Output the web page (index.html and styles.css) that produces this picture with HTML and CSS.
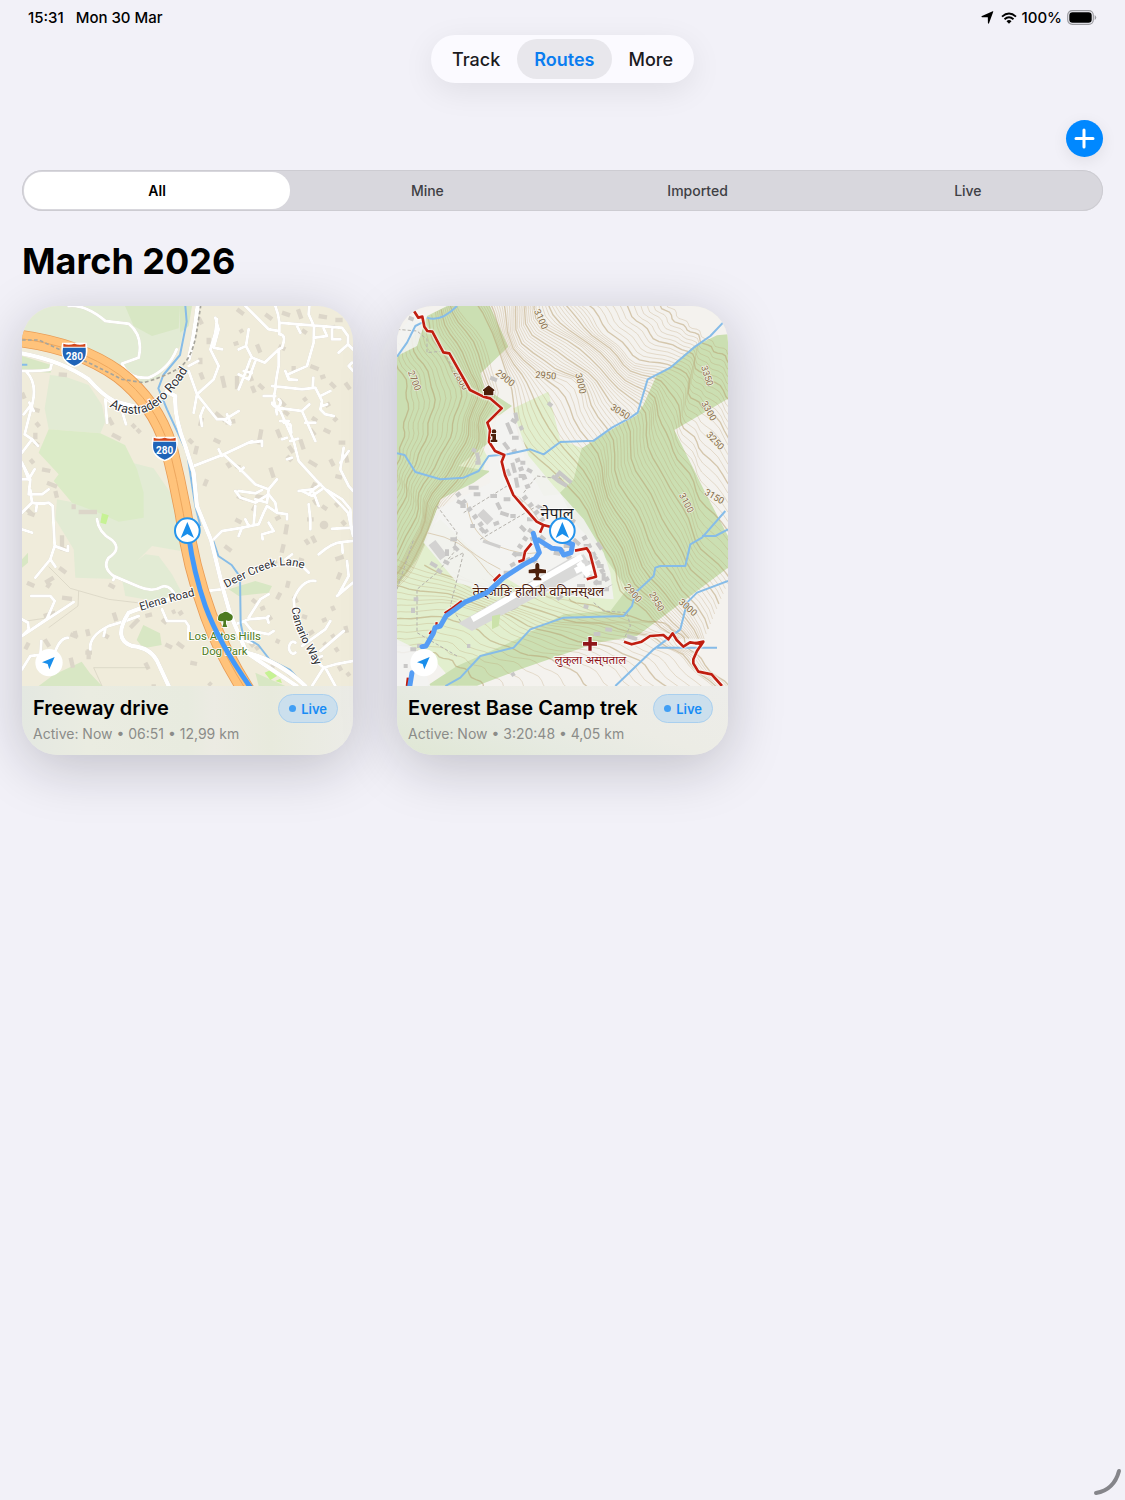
FILE: index.html
```html
<!DOCTYPE html>
<html lang="en">
<head>
<meta charset="utf-8">
<meta name="viewport" content="width=device-width, initial-scale=1">
<title>Routes</title>
<link rel="stylesheet" href="styles.css">
</head>
<body>
<div class="status">
  <span class="status-time">15:31</span>
  <span class="status-date">Mon 30 Mar</span>
  <span class="status-right">
    <svg class="icon-location" viewBox="0 0 12 12" aria-hidden="true"><path d="M11.3.6 7.4 11.2Q6.9 12.200 6.400 11L6.300 5.800 1 5.700Q-.1 5.300.9 4.700L10.800.3Q11.500.1 11.300.6Z"/></svg>
    <svg class="icon-wifi" viewBox="0 0 16 12" aria-hidden="true"><g fill="none" stroke="#000" stroke-width="1.900"><path d="M1 4.600Q8-1.700 15 4.600"/><path d="M3.500 7.300Q8 3.300 12.500 7.300"/></g><path d="M5.500 9.200Q8 7 10.500 9.200L8 11.800Z"/></svg>
    <span>100%</span>
    <svg class="icon-battery" viewBox="0 0 30 15" aria-hidden="true"><rect x=".7" y=".7" width="25.600" height="13.600" rx="4.500" fill="none" stroke="#9b9ba0" stroke-width="1.200"/><rect x="2.300" y="2.300" width="22.400" height="10.400" rx="3.200"/><path d="M27.700 5Q29.200 6 29.200 7.500T27.700 10Z" fill="#9b9ba0"/></svg>
  </span>
</div>

<nav class="tabs" aria-label="Sections">
  <button type="button" class="tab">Track</button>
  <button type="button" class="tab tab-on" aria-current="page">Routes</button>
  <button type="button" class="tab">More</button>
</nav>

<main class="content">
  <div class="toolbar">
    <button type="button" class="add" aria-label="Add route"><svg viewBox="0 0 37 37" aria-hidden="true"><path d="M18 10V27M10 18.500H27"/></svg></button>
  </div>

  <div class="segments" role="group" aria-label="Filter routes">
    <button type="button" class="segment segment-on" aria-pressed="true">All</button>
    <button type="button" class="segment" aria-pressed="false">Mine</button>
    <button type="button" class="segment" aria-pressed="false">Imported</button>
    <button type="button" class="segment" aria-pressed="false">Live</button>
  </div>

  <h1 class="month">March 2026</h1>

  <div class="cards">
    <article class="card">
      <svg class="map map-road" viewBox="0 0 993 1140" role="img" aria-label="Map of Freeway drive">
        <defs>
          <path id="arastradero" d="M262 302Q350 352 420 288 475 238 512 165"/>
          <path id="elena" d="M356 914Q450 885 550 862"/>
          <path id="deer" d="M613 846Q700 800 750 784T865 796"/>
          <path id="canario" d="M809 905Q815 960 845 1015T900 1115"/>
        </defs>
        <g class="green">
          <path d="M0 0H500L474 120 410 215 350 235 220 150 0 75Z"/>
          <path class="mid" d="M309 0H474L470 67 390 90 335 60Z"/>
          <path class="mid" d="M0 150 90 178 86 200 0 195Z"/>
          <path d="M84 207 130 212 200 237 240 297 250 347 235 382 80 370 68 307Z"/>
          <path d="M330 470 395 487 452 570 476 735 390 720 345 765 370 745 410 750 450 805 490 880 400 885 310 870 300 820 160 815 155 730 100 640 105 580 160 590 300 630 350 600Z"/>
          <path class="bright" d="M80 370 235 382 309 417 345 490 365 560 365 635 290 647 230 620 150 590 95 525 110 505 50 440Z"/>
          <path class="mid" d="M364 957 414 982 419 1017 364 1027 344 1002ZM50 1140 94 1107 179 1067 204 1102 240 1140ZM474 0H510L500 60 474 80ZM620 850 700 825 750 840 740 860 650 870ZM0 760 18 740 18 770 0 785ZM700 1100 790 1140H710Z"/>
          <path class="lime" d="M240 622 260 628 252 655 235 650ZM728 1100 750 1090 765 1110 745 1122ZM760 1125 775 1118 780 1132Z"/>
        </g>
        <g class="houses">
          <path d="M110 205l25 2M270 385l26 14M260 335l12 22M330 355l10 10M345 370l10 10M35 310l18 5M0 260l8 18M42 350l10 12M40 380v20M25 460l10 12M60 490l25 5M75 530l30 12M100 555l5 20M38 410l12 8"/>
          <path d="M170 618h55M155 595v15M120 688v40l20 5M112 785l20 15M15 830l22 10M70 830l25-15M75 845l10-15M18 620l20 8M10 605l20 20M120 875l30 4M65 930l35-10M145 985l22 8M158 975l5 20M10 1030l10-20M68 1000l14 22M146 1055l7 30M245 985l15 10M200 1030v30M190 1040h20M195 970l5 20M275 920l8 25M325 965l25-25M370 930l20-5M450 920l10-5M470 925l12-8M420 940l14 12M430 1015l20 10M465 1010l20 15M370 1070l10 20M395 1135v5M260 835l18 10"/>
          <path d="M645 10l20 15M530 35l10 20M560 95v20M535 155v20M535 200l8 20M600 210l8 35M730 25l20 15M780 20l24 8M828 10l10 28M890 30l25 4M940 42h22M925 65l15-2M840 72l14 10M635 115l14-5M655 70l6 10M705 115l10 25M675 185l15 40M645 210v40M690 240l8 20M770 120l20 10M815 180v20M865 180l25 10M895 215l15-5M925 230l15 15M970 230l14 20M710 235l15 14M770 280l20 20M785 315l15 12M845 275l8 10M910 300l14-8M935 345l10-10M905 370l20 10M870 335l15 10M580 320l30 25M610 350l30-5M540 335l-6 25M500 400l12 12M525 420l-6 25M575 400l20 10M710 415l8-45M765 370l10 25M835 400l10 30M865 370l14 18M800 420l14 20M795 450l14 15M860 465l25 15M615 470l10 15M555 520l-8 20M745 485l10 30M640 480l15 5M950 410h20M925 460l10 20M970 440l6 30M940 510l20 5M880 530l-10 20"/>
          <path d="M700 570l25 5M700 600l-8 15M645 570l20 8M640 640l18 10M608 720l20 15M760 640l15-8M795 655l-5 30M785 715l-6 25M850 700l10 15M870 690l10 20M855 640h20M940 590l10 12M875 580l10 15M900 600l15 10M960 645l10 12M940 760l25-8M955 800l-8 20M800 825l-5 20M815 870l10 20M775 860l-10 20M740 930l8 12M715 910l14-6M690 880l12 10M640 970l8-4M685 1010l10 12M700 1030l14-10M755 1070l-6 20M770 1000l-6 12M860 985l15-10M840 930l15 5M900 945l14-6M930 985l8 14M940 1025l8 12M905 1010l10 10M885 1065l14-10M950 1080l8 14M975 1100l8 10M800 1100l8 8M560 1130l8 8M505 1070l20 4M930 900l6 14M970 960l5 20M830 760l15 5M750 770l15-5"/>
          <circle cx="906" cy="657" r="13"/>
        </g>
        <path class="outline" d="M80 782 145 847 260 880 370 893M170 855 168 900 80 965M215 1085 380 1085M215 1085 240 1140M0 947 80 935"/>
        <g class="roads">
          <path d="M140 0Q190 -5 250 45L320 53Q365 90 350 155L300 173Q320 220 380 215 440 190 464 130"/>
          <path d="M0 195Q70 195 85 190L90 170M14 198Q45 230 32 290L5 325M22 290 35 315M32 290 8 385 30 400 0 440M30 400 48 420M5 480 25 520 20 565M0 470 20 520 38 490M25 520H0M20 565 60 565 80 550M250 280 255 350M254 280 300 315 312 355"/>
          <path d="M25 552 30 590Q55 595 80 590L92 600 98 720 138 735 138 720M98 720 85 760 40 815M85 760 100 782M30 590 0 620M45 592 42 615M0 670 30 680M28 870 85 870 98 885 75 938M80 935 0 990 20 970 18 950 0 940M0 990 155 888M0 1090 25 1050 70 1045M55 1050 58 1005M100 1035Q115 995 138 995"/>
          <path d="M225 640Q230 680 270 702 300 730 260 755 240 785 275 810L350 842Q390 860 420 842 445 835 460 870M278 812 274 822M205 1030Q200 990 260 960L310 945 350 930M245 990 250 970"/>
          <path d="M420 910 435 945 490 945 500 960 498 1000"/>
          <path d="M670 0 740 70 770 75M760 0Q770 25 772 50V85Q795 85 780 125L770 130 728 170 690 155 672 120 680 70M672 120 650 130M770 130V180Q760 230 760 250M772 50 960 65 978 90V115L950 140M978 115 993 130M862 0 860 25 876 60 875 110 855 180 798 205 800 220 825 222M800 220 790 195M825 60 835 80M905 68 915 90 875 95M930 70V100H955M685 160 670 200 650 250M700 165 680 220 650 205M690 200 665 195M760 250Q750 290 765 305L775 315 815 405 830 465 880 520 900 540 960 600 978 620 993 690M750 240 840 250 880 245 900 285 895 310 910 325 935 330M872 245 874 215M895 270 925 255M900 300 915 295M765 305 840 315 880 405M840 315 862 295M850 350 880 350M762 310 765 325M760 270 725 270M750 290a13 12 0 1 0 20-10M775 345 800 345M795 395 780 400M805 405 828 398M810 455 795 460M785 350 805 355 808 380"/>
          <path d="M990 170 980 180 993 195M585 40 580 80 565 130 590 180 575 220 525 265M580 35 590 70 575 125 600 130M500 195 525 265 515 320M525 265 585 340 610 340 650 315M545 305 535 330 540 360M615 325 625 350M605 340 625 355M500 180 528 165"/>
          <path d="M515 480 605 445 690 405M605 445 680 410 720 405 720 420M605 445 665 500 700 535 740 550 765 520M590 430 600 450M655 495 665 485M740 550 735 590 700 580M830 555 875 550 895 535M860 565 880 545M965 425 955 490 980 540 993 555M955 470 980 435"/>
          <path d="M568 707 600 675 660 665 710 655 725 620 735 600 765 620 760 590 740 565 700 590 655 575 640 555M765 620 795 625 795 640M660 665 650 690M700 600 695 655M740 650 755 675 720 685 722 700M670 640 680 660M650 555 700 562 720 552M860 595 865 640 865 670M875 560 890 600M840 555 870 570 900 550M915 552 960 580 985 610 988 660M930 668 993 665M890 745Q930 710 960 708L993 705M960 710 962 740M975 765 980 810 950 865M993 830 945 870M820 930 815 880Q840 820 880 825M830 770 860 800M790 760 810 745"/>
          <path d="M555 855 600 850 630 835M640 955 680 940 735 935 740 930M680 935 715 880 740 865M670 950 690 975 740 985 755 975M735 935 740 950M840 1020 910 970 925 945M900 1050 870 1065M895 1035 965 975M820 1010a12 18 0 1 0 0 30M875 1060 905 1085 940 1075 993 1065M905 1085 870 1140M910 1085 940 1140M650 1000 690 1010"/>
        </g>
        <g class="water"><path d="M490 0 494 47 474 147 424 207 409 247 435 310 495 440 520 600 535 660M574 705 589 750 629 777 654 812 656 952 664 990 709 1017 744 1062 804 1092 849 1140M0 176H16"/></g>
        <g class="roads wide">
          <path d="M527 0Q515 100 500 160M434 257 460 270Q455 330 490 420L515 500 525 600 567 702 604 852 625 925 674 1040 824 1140"/>
          <path d="M0 142Q120 165 200 220 240 265 275 285L345 303 410 280M490 865Q370 900 320 920 270 1000 330 1020 390 1025 410 1075L440 1140"/>
          <path d="M674 1040Q770 1065 850 1140"/>
        </g>
        <path class="freeway-edge" d="M-10 97Q170 120 290 205 400 290 440 420 465 520 484 622 505 780 560 930 600 1040 680 1165"/>
        <path class="freeway" d="M-10 97Q170 120 290 205 400 290 440 420 465 520 484 622 505 780 560 930 600 1040 680 1165"/>
        <path class="freeway-line" d="M-10 97Q170 120 290 205 400 290 440 420 465 520 484 622 505 780 560 930 600 1040 680 1165"/>
        <path class="trail" d="M0 102 50 102 210 175 300 220 364 230Q420 215 465 190T524 77L536 0"/>
        <g class="shield">
          <g id="i280"><path class="shield-rim" d="M122 112H192Q198 135 190 155 178 177 157 182 135 177 124 155 117 135 122 112Z"/><path class="shield-blue" d="M123 125H191Q193 145 187 157 175 174 157 179 140 174 127 157 120 145 123 125Z"/><path class="shield-red" d="M124 113Q140 119 157 113 174 119 190 113V122H124Z"/><text x="157" y="162">280</text></g>
          <use href="#i280" x="271" y="282"/>
        </g>
        <g class="road-name">
          <text class="through"><textPath href="#arastradero">Arastradero Road</textPath></text>
          <text><textPath href="#elena">Elena Road</textPath></text>
          <text><textPath href="#deer">Deer Creek Lane</textPath></text>
          <text><textPath href="#canario">Canario Way</textPath></text>
        </g>
        <g class="park">
          <path d="M588 942Q586 924 602 921 612 912 624 923 637 928 630 941 620 948 612 943V953L616 963H601L604 953V945Q594 948 588 942Z"/>
          <text x="608" y="1003">Los Altos Hills</text><text x="608" y="1046">Dog Park</text>
        </g>
        <path class="track-line" d="M500 690Q515 800 550 900 590 1010 686 1145"/>
        <g id="position"><circle class="position-disc" cx="496" cy="674" r="37"/><path class="arrow" d="M496 648 516 696 496 684 476 696Z"/></g>
        <g id="heading"><circle cx="81" cy="1070" r="41" fill="#fff"/><path class="arrow" d="M98 1053 82 1090 77 1074 60 1069Z"/></g>
      </svg>
      <div class="info">
        <h2 class="name">Freeway drive</h2>
        <span class="live">Live</span>
        <p class="meta">Active: Now • 06:51 • 12,99 km</p>
      </div>
    </article>

    <article class="card card-hill">
      <svg class="map map-topo" viewBox="0 0 993 1140" role="img" aria-label="Map of Everest Base Camp trek">
        <g class="meadow">
          <path d="M349 307 454 257 489 400 554 427 540 560 440 570 385 470ZM180 480 249 410 270 450 255 505ZM0 800 80 680 130 640 300 800 400 860 700 850 720 900 400 1000 180 1140 110 1060 0 1010ZM580 640 640 720 720 830 680 930 560 900Z"/>
        </g>
        <g class="forest">
          <path d="M0 155 90 30 150 0H279L334 122 251 202 262 245 345 300 270 355 275 410 185 480 280 495 230 530 130 580 90 700 60 760 0 840Z"/>
          <path d="M993 85 960 88 889 122 820 182 780 205 740 295 720 327 650 367 554 427 530 520 489 560 540 660 600 720 690 850 640 915 500 925 360 1000 180 1080 90 1139 240 1139 370 1090 600 1010 720 990 993 785V690L925 560 832 372 993 278Z"/>
        </g>
        <g class="contours" data-step="12" data-guides="-20 130 30 250 20 380 0 480 -20 560|110 20 150 120 220 230 200 350 160 450 90 560 60 680 -10 800|180 -10 260 100 310 250 270 350 260 450 200 540 120 640 60 780 -10 860"></g>
        <g class="contours" data-step="13" data-guides="230 -20 320 160 345 280 390 430 500 520 580 640 640 760 680 860 760 930 840 1000|340 -20 360 110 440 190 530 220 560 300 620 400 640 520 700 640 760 760 820 850 870 900 920 1000|420 -20 440 60 560 120 640 220 740 290 760 380 790 480 850 560 890 660 940 740 1010 800|540 -20 620 80 720 170 850 200 880 290 930 330 1010 430|820 -20 900 60 1010 130"></g>
        <g class="contours" data-step="7" data-guides="-10 1040 100 1040 200 1090 280 1160|-10 900 200 900 400 1010 600 1060 720 1160|-10 760 180 830 420 930 600 960 760 1000 860 1060 960 1160|600 900 720 930 850 960 900 1040 1010 1150"></g>
        <path class="village" d="M300 330 350 320 395 450 470 540 560 640 620 740 640 800 650 880 500 870 400 850 330 800 290 860 180 830 80 710 120 610 280 530 270 450ZM0 1000 60 1030 100 1140H0ZM0 90 50 20 90 30 60 120 0 150Z"/>
        <path class="meadow-line" d="M180 700Q230 750 310 790M90 680Q200 700 250 770T340 840M210 590Q220 690 300 720T420 740M340 560Q390 580 430 650"/>
        <path class="paths" d="M0 70 60 75 90 100 90 140 140 135 200 250M120 600 180 680 170 740 120 800 60 850 60 980 180 1050M200 620 330 540M250 700 420 600M160 760 200 740 160 900 200 960M380 560 420 510 500 520M590 890 620 915 690 920 700 960 680 1000M0 850 50 700"/>
        <g class="blocks">
          <path class="large" d="M250 618l30 30M105 710l35 45"/>
          <path d="M35 35l15 6M280 215l20 8M453 290l12 10M330 350l14 34M343 340l16 10M355 320l5 25M370 360l6 12M345 395h20M320 410l15 20M302 436l20 20M346 470l8 30M356 515l6 30M330 490l8 20M240 440l5 25M235 470h16M225 430l12 6M370 470h15M390 490l15 8M365 510h20M465 510l20 15 25 15M470 520l18-20 35 30M215 545h30M230 565h20M180 585l20 10M190 600h16M160 700h20M170 720l14 14M150 730v20M280 570h20M300 590l10 20M320 580h20M365 580l10 12M310 620l25 8M290 655l16-6M340 630h16M250 665l12 14M220 660h14M390 640h20M370 660l15 15M420 600l20 10M400 700l20-8M430 690l14 12M440 720h20M355 745h30M370 770l30-12M340 780l14-8M320 800h20M400 760l20 10M470 740l20 4M500 720h26M530 700l18 16M560 720h20M580 740l20 20M600 710l14 20M600 780h20M620 800v24M590 830h24M560 810h20M540 840h24M510 860h20M480 840h16M500 790l20-8M570 770h20M610 850h26M520 640l14 8M430 800l14-6M560 900l14 4M100 770l20 12M120 790l14 10M140 765l16 8M50 880h14M48 905v16M60 1020h10M210 1020h10M340 910l22-12M480 880l16-12M590 985l20-2M625 970l20 2M690 990l30 10M345 1100l6 10M20 1080h12M40 1030h18"/>
        </g>
        <g class="blocks scatter"><path d="M350 430l45 120M380 570l70 90M180 560l90 120M490 730l120 110M560 690l80 150M350 750l60-90"/></g>
        <path class="houses-row" d="M258 705 310 723"/>
        <path class="apron" d="M184 952 519 757 560 745 585 785 225 975Z"/>
        <path class="runway" d="M225 940 555 752M535 795 565 780M545 770 575 810M560 795 590 780"/>
        <path class="meadow-patch" d="M285 930 310 925 305 960 285 970Z"/>
        <g class="water"><path d="M0 152 30 110 55 60 75 50 M90 35Q130 50 180 0M0 442 23 447 55 498 130 520 200 515 245 495 275 450 330 445 400 430 440 445 490 408 590 404 645 365 700 335 722 320 752 220 820 185 890 125 940 90 978 50M145 1140 190 1115 250 1050 350 1025 400 970 500 935 680 930 705 900 715 860 770 810 775 785 790 780H865L880 715 915 695 985 615M915 690H955L993 670M655 1140 770 1030 850 970 870 890 900 860 993 825M780 1025H960"/></g>
        <g class="height">
          <text transform="translate(32 198) rotate(68)">2700</text><text transform="translate(168 200) rotate(60)">2800</text><text transform="translate(294 204) rotate(38)">2900</text><text transform="translate(414 215) rotate(5)">2950</text><text transform="translate(410 15) rotate(65)">3100</text><text transform="translate(535 204) rotate(77)">3000</text><text transform="translate(638 308) rotate(32)">3050</text><text transform="translate(912 182) rotate(72)">3350</text><text transform="translate(912 292) rotate(60)">3300</text><text transform="translate(926 388) rotate(46)">3250</text><text transform="translate(845 567) rotate(62)">3100</text><text transform="translate(920 564) rotate(30)">3150</text><text transform="translate(680 844) rotate(48)">2900</text><text transform="translate(755 864) rotate(60)">2950</text><text transform="translate(843 890) rotate(42)">3000</text>
        </g>
        <g class="red-route">
          <path d="M51 15 64 35 76 32 82 62 91 75 106 77 139 139 157 142 219 252 259 272 279 277 314 307 271 350 279 372 276 407 294 435 322 447 314 467 324 507 349 567 379 602 419 647 439 657 465 664M439 657 429 680M404 712 384 737 379 762 364 767M534 734 569 727 579 742 597 812 569 820M681 1007 704 1015 734 1007 759 990 799 987 814 1000 827 982 839 1002 859 1022 879 1009 914 1014 900 1035 889 1060 889 1072 904 1097 944 1105 975 1140M894 1012 919 1007 909 1022M143 922 165 908 195 885M115 952 122 953M98 985 105 975M290 825 310 805M30 1140 33 1115"/>
        </g>
        <g class="poi">
          <path d="M261 268V255H258V251L275 238 292 251V255H289V268Z"/>
          <path d="M415 776Q421 764 427 776V788L447 791V802L427 802 425 812 433 818V823H409V818L417 812 415 802 395 802V791L415 788Z"/>
          <circle cx="291" cy="377" r="7"/><path d="M282 384H297V401H301V408H281V401H286V391H282Z"/>
          <text x="424" y="871">तेन्‌जाङि हलिारी वमिानस्‌थल</text>
        </g>
        <text class="country" x="480" y="638">नेपाल</text>
        <g class="hospital"><path d="M574 993H584V1008H600V1019H584V1034H574V1019H558V1008H574Z"/><text x="580" y="1074">लुक्‌ला अस्‌पताल</text></g>
        <path class="trek-line" d="M38 1142 45 1100M75 1022 87 1020 109 982 114 965 130 960 147 930 205 888 270 860 320 815 380 776 415 757 427 740 415 705 409 682M425 702 465 727 490 730 500 747 522 740 527 715 500 705"/>
        <use href="#position"/>
        <use href="#heading"/>
      </svg>
      <div class="info">
        <h2 class="name">Everest Base Camp trek</h2>
        <span class="live">Live</span>
        <p class="meta">Active: Now • 3:20:48 • 4,05 km</p>
      </div>
    </article>
  </div>
</main>
<svg class="corner" viewBox="0 0 30 30" aria-hidden="true"><path d="M4 26Q22 23 27 4"/></svg>
<script src="contours.js"></script>
</body>
</html>
```
FILE: styles.css
```css
* { box-sizing: border-box; }
body { margin: 0; min-height: 100vh; background: #f2f1f8; color: #000; font-family: Inter, "Noto Sans", sans-serif; }
button { border: 0; padding: 0; background: none; color: inherit; font: inherit; }
h1, h2, p { margin: 0; }
svg { display: block; }

.status { display: flex; align-items: center; gap: 12px; height: 35px; padding: 0 28px; font-size: 15px; font-weight: 500; }
.status-right { display: flex; align-items: center; gap: 5px; margin-left: auto; }
.icon-location { width: 13px; height: 13px; margin-right: 2px; }
.icon-wifi { width: 16px; height: 12px; }
.icon-battery { width: 30px; height: 15px; }

.tabs { display: flex; width: fit-content; margin: 0 auto; padding: 4px; border-radius: 24px; background: #fbfaff; box-shadow: 0 8px 32px rgba(0, 0, 0, .08); }
.tab { height: 40px; padding: 0 17px; border-radius: 20px; color: #1b1b1f; font-size: 18px; font-weight: 500; }
.tab-on { background: #e8e7ec; color: #0a7df0; font-weight: 600; }

.content { padding: 37px 22px 0; }
.toolbar { display: flex; justify-content: flex-end; }
.add { width: 37px; height: 37px; border-radius: 50%; background: #0088ff; box-shadow: 0 4px 16px rgba(0, 0, 0, .08); }
.add path { fill: none; stroke: #fff; stroke-width: 3; stroke-linecap: round; }

.segments { display: grid; grid-template-columns: repeat(4, 1fr); height: 41px; margin-top: 13px; padding: 2px 0; border-radius: 21px; background: #d8d7dd; box-shadow: inset 0 0 0 1px #cdccd2; }
.segment { border-radius: 18px; color: #3f3f44; font-size: 14px; font-weight: 500; }
.segment-on { margin: 0 2px; background: #fff; color: #000; font-weight: 600; }

.month { margin: 25px 0 20px; font-size: 36px; font-weight: 700; line-height: 50px; }

.cards { display: grid; grid-template-columns: repeat(3, 1fr); gap: 44px; }
.card { border-radius: 36px; overflow: hidden; background: #eaeae5; box-shadow: 0 12px 56px rgba(20, 20, 30, .22); }
.map { width: 100%; height: auto; }
.info { display: grid; grid-template-columns: 1fr auto; align-items: center; padding: 8px 15px 10px 11px; background: linear-gradient(90deg, #e4e8e1, #eaece1 20%, #e8ebdf 50%, #ecebe3 58%, #e8eadd 75%, #ecece7); }
.card-hill .info { background: linear-gradient(20deg, #dfe7d4, #e6eae1 35%, #ecece5 60%, #ededea); }
.name { font-size: 20px; font-weight: 600; line-height: 29px; white-space: nowrap; }
.live { display: flex; align-items: center; gap: 5px; height: 29px; padding: 0 10px; border: 1px solid #a9cfee; border-radius: 15px; background: #cbdfed; color: #188cf5; font-size: 13px; font-weight: 600; }
.live::before { content: ""; width: 7px; height: 7px; border-radius: 50%; background: #419ff5; }
.meta { grid-column: 1 / -1; color: #8b8c89; font-size: 14px; line-height: 22px; }

.corner { position: fixed; right: 3px; bottom: 3px; width: 30px; height: 30px; }
.corner path { fill: none; stroke: #85858a; stroke-width: 4; stroke-linecap: round; }

.map text { font-family: Roboto, "Noto Sans", sans-serif; }
.map-road { background: #f0ecdb; }
.map-topo { background: #f4f2ee; }
.green { fill: #e2ebd4; }
.mid { fill: #d8e7c4; }
.bright { fill: #dbebc7; }
.lime { fill: #c6f294; }
.houses path { fill: none; stroke: #dcd6c9; stroke-width: 13; }
.houses circle { fill: #dcd6c9; }
.outline { fill: none; stroke: #d5d0c0; stroke-width: 2; }
.roads { fill: none; stroke: #fff; stroke-width: 9; stroke-linecap: round; stroke-linejoin: round; filter: drop-shadow(0 0 2px #cbc5b4); }
.wide { stroke-width: 13; }
.water { fill: none; stroke: #86bce8; stroke-width: 6; stroke-linejoin: round; }
.freeway-edge { fill: none; stroke: #e89c56; stroke-width: 52; }
.freeway { fill: none; stroke: #ffc37b; stroke-width: 47; }
.freeway-line { fill: none; stroke: #eda75e; stroke-width: 3; }
.trail { fill: none; stroke: #a7a59c; stroke-width: 5; stroke-dasharray: 11 7; }
.shield-rim { fill: #fff; stroke: #fff; stroke-width: 4; }
.shield-blue { fill: #1f64b8; }
.shield-red { fill: #d3481d; }
.shield text { fill: #fff; font-size: 30px; font-weight: 700; text-anchor: middle; }
.road-name { fill: #2f3033; stroke: #fff; stroke-width: 6; paint-order: stroke; font-size: 34px; }
.road-name .through { font-size: 38px; }
.park { fill: #4e7b20; stroke: #fff; stroke-width: 5; paint-order: stroke; font-size: 34px; text-anchor: middle; }
.track-line { fill: none; stroke: #4399fa; stroke-width: 15; }
.position-disc { fill: #fff; stroke: #2494ec; stroke-width: 6; }
.arrow { fill: #198eeb; }

.forest { fill: #cbdfb2; }
.meadow { fill: #e2efce; }
.meadow-patch { fill: #cbe2aa; }
.village { fill: #f2f2f1; opacity: .88; }
.contours path { fill: none; stroke: #b69c6c; stroke-width: 2; opacity: .42; }
.contours .index { stroke-width: 4; opacity: .5; }
.meadow-line { fill: none; stroke: #dccfb8; stroke-width: 3; }
.paths { fill: none; stroke: #b5b2ac; stroke-width: 3; stroke-dasharray: 10 6; }
.blocks path { fill: none; stroke: #c8c7c6; stroke-width: 12; }
.blocks .large { stroke: #d3d2d1; stroke-width: 26; }
.blocks.scatter path { stroke-dasharray: 13 15; stroke-width: 15; }
.houses-row { stroke: #cfcecd; stroke-width: 10; }
.apron { fill: #d9d9d8; }
.runway { fill: none; stroke: #fff; stroke-width: 18; }
.height { fill: #866b47; stroke: #f4f2e8; stroke-width: 4; paint-order: stroke; font-size: 28px; }
.red-route { fill: none; stroke: #c01e10; stroke-width: 8; stroke-linejoin: round; filter: drop-shadow(0 0 3px #fff) drop-shadow(0 0 2px #fff); }
.poi { fill: #4c200b; stroke: #fff; stroke-width: 4; paint-order: stroke; font-size: 39px; text-anchor: middle; }
.country { fill: #1e1e24; stroke: #fff; stroke-width: 5; paint-order: stroke; font-size: 48px; text-anchor: middle; }
.hospital { fill: #8f1519; stroke: #fff; stroke-width: 4; paint-order: stroke; font-size: 35px; text-anchor: middle; }
.trek-line { fill: none; stroke: #559df5; stroke-width: 15; stroke-linejoin: round; stroke-linecap: round; }
```
FILE: contours.js
```js
// Fills each contour group with height lines blended between its guide curves.
const SAMPLES = 30;

function resample(points) {
  const out = [];
  for (let i = 0; i <= SAMPLES; i++) {
    const t = (i / SAMPLES) * (points.length - 1);
    const k = Math.min(Math.floor(t), points.length - 2);
    const f = t - k;
    const at = n => points[Math.max(0, Math.min(points.length - 1, n))];
    out.push([0, 1].map(c => {
      const a = at(k - 1)[c], b = at(k)[c], d = at(k + 1)[c], e = at(k + 2)[c];
      return b + 0.5 * f * (d - a + f * (2 * a - 5 * b + 4 * d - e + f * (3 * (b - d) + e - a)));
    }));
  }
  return out;
}

document.querySelectorAll(".contours").forEach(group => {
  const steps = Number(group.dataset.step);
  const guides = group.dataset.guides.split("|").map(text => {
    const n = text.trim().split(/\s+/).map(Number);
    const points = [];
    for (let i = 0; i < n.length; i += 2) points.push([n[i], n[i + 1]]);
    return resample(points);
  });
  let count = 0;
  for (let g = 0; g < guides.length - 1; g++) {
    for (let s = 0; s < steps; s++) {
      const mix = s / steps;
      const line = guides[g].map((p, i) => {
        const q = guides[g + 1][i];
        const wave = 5 * Math.sin(i * 1.3 + count * 0.12);
        return (p[0] + (q[0] - p[0]) * mix + wave).toFixed(1) + " " + (p[1] + (q[1] - p[1]) * mix - wave / 2).toFixed(1);
      });
      const path = document.createElementNS("http://www.w3.org/2000/svg", "path");
      path.setAttribute("d", "M" + line.join("L"));
      if (count % 5 === 0) path.setAttribute("class", "index");
      group.appendChild(path);
      count++;
    }
  }
});
```
